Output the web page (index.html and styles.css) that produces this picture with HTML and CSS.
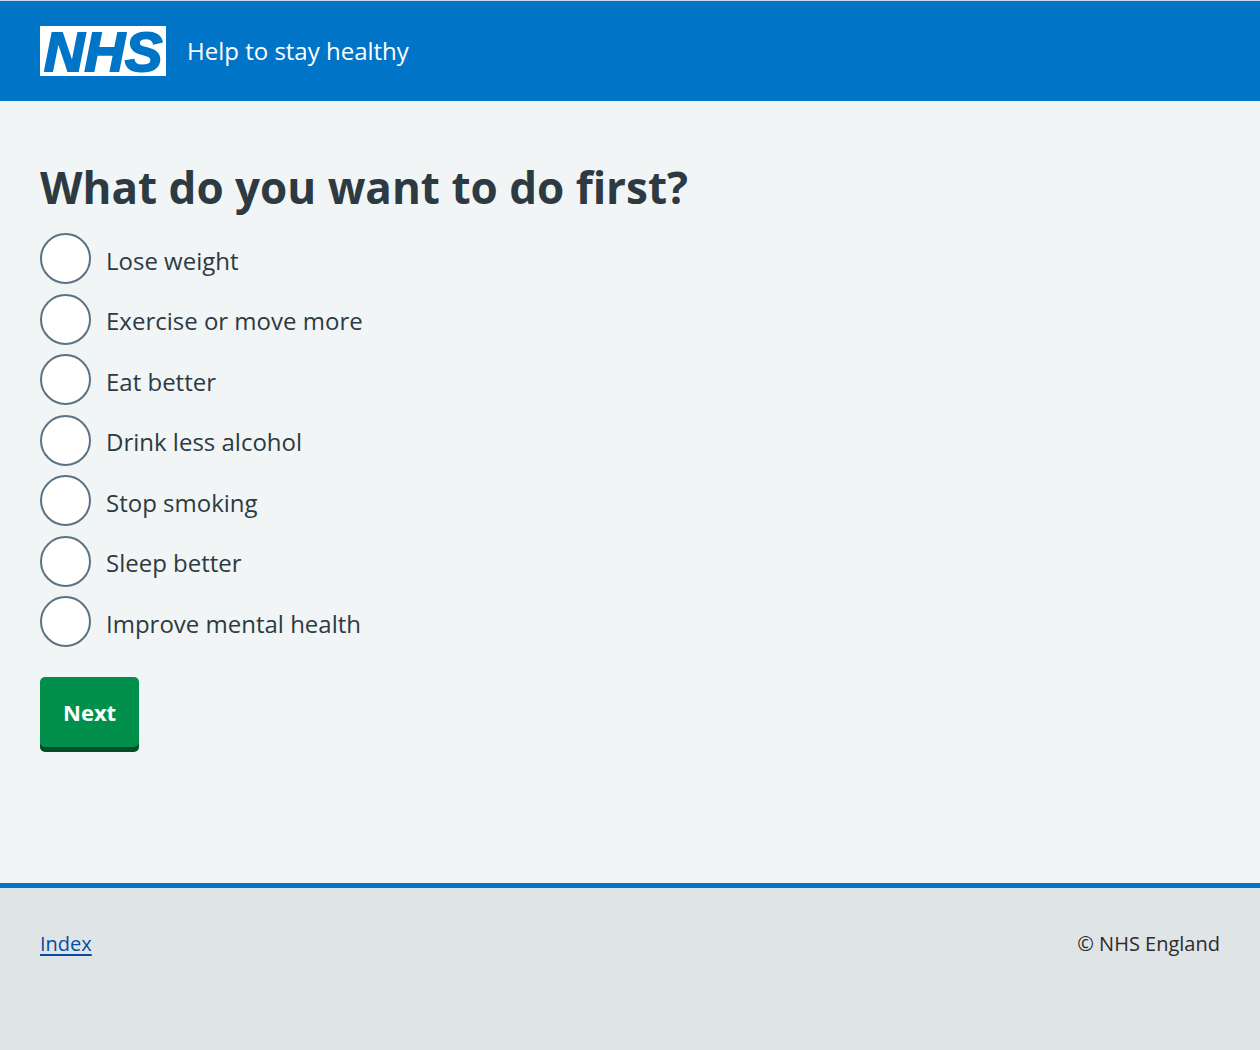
FILE: index.html
```html
<!DOCTYPE html>
<html lang="en">
<head>
  <meta charset="utf-8">
  <meta name="viewport" content="width=device-width, initial-scale=1">
  <title>What do you want to do first? - Help to stay healthy</title>
  <link rel="stylesheet" href="styles.css">
</head>
<body>
  <header class="header">
    <svg class="header-logo" viewBox="0 0 126 50" role="img" aria-label="NHS">
      <rect class="logo-panel" width="126" height="50"/>
      <text class="logo-text" x="4" y="45">NHS</text>
    </svg>
    <span class="header-service">Help to stay healthy</span>
  </header>

  <main class="main">
    <form class="form">
      <fieldset class="fieldset">
        <legend class="legend"><h1 class="heading">What do you want to do first?</h1></legend>
        <div class="radios">
          <div class="radio"><input class="radio-input" type="radio" name="goal" id="goal-weight"><label class="radio-label" for="goal-weight">Lose weight</label></div>
          <div class="radio"><input class="radio-input" type="radio" name="goal" id="goal-exercise"><label class="radio-label" for="goal-exercise">Exercise or move more</label></div>
          <div class="radio"><input class="radio-input" type="radio" name="goal" id="goal-eat"><label class="radio-label" for="goal-eat">Eat better</label></div>
          <div class="radio"><input class="radio-input" type="radio" name="goal" id="goal-alcohol"><label class="radio-label" for="goal-alcohol">Drink less alcohol</label></div>
          <div class="radio"><input class="radio-input" type="radio" name="goal" id="goal-smoking"><label class="radio-label" for="goal-smoking">Stop smoking</label></div>
          <div class="radio"><input class="radio-input" type="radio" name="goal" id="goal-sleep"><label class="radio-label" for="goal-sleep">Sleep better</label></div>
          <div class="radio"><input class="radio-input" type="radio" name="goal" id="goal-mental"><label class="radio-label" for="goal-mental">Improve mental health</label></div>
        </div>
      </fieldset>
      <button class="button" type="submit">Next</button>
    </form>
  </main>

  <footer class="footer">
    <a class="footer-link" href="#">Index</a>
    <p class="footer-copyright">© NHS England</p>
  </footer>
</body>
</html>
```

FILE: styles.css
```css
* {
  box-sizing: border-box;
}

body {
  display: flex;
  flex-direction: column;
  min-height: 100vh;
  margin: 0;
  background: #dfe4e6;
  color: #2d3a42;
  font-family: "Open Sans", sans-serif;
  font-size: 24px;
  line-height: 32px;
}

.header {
  display: flex;
  align-items: center;
  gap: 21px;
  padding: 25px 40px;
  border-top: 1px solid #c4dcee;
  background: #0075c7;
  color: #fff;
}

.header-logo {
  width: 126px;
  height: 50px;
  overflow: visible;
}

.logo-panel {
  fill: #fff;
}

.logo-text {
  fill: #0075c7;
  stroke: #0075c7;
  stroke-width: 2px;
  font: italic bold 56px "Liberation Sans", Arial, sans-serif;
}

.main {
  padding: 59px 40px 136px;
  background: #f1f5f6;
}

.fieldset {
  min-width: 0;
  margin: 0;
  padding: 0;
  border: 0;
}

.legend {
  padding: 0;
}

.heading {
  margin: 0 0 18px;
  font-size: 44px;
  line-height: 55px;
  font-weight: 700;
}

.radios {
  display: grid;
  grid-auto-rows: 51px 52px;
  row-gap: 9px;
}

.radio {
  display: flex;
  align-items: center;
  gap: 15px;
}

.radio-input {
  appearance: none;
  width: 51px;
  height: 51px;
  margin: 0;
  border: 2px solid #5a7283;
  border-radius: 50%;
  background: #fff;
}

.radio-input:checked {
  box-shadow: inset 0 0 0 10px #fff;
  background: #2d3a42;
}

.radio-label {
  padding-top: 4px;
}

.button {
  display: block;
  margin: 30px 0 0;
  padding: 19px 23px;
  border: 0;
  border-radius: 5px;
  background: #00904b;
  box-shadow: 0 5px 0 #004d28;
  color: #fff;
  font: inherit;
  font-size: 22px;
  font-weight: 700;
}

.footer {
  display: flex;
  flex-wrap: wrap;
  justify-content: space-between;
  gap: 20px;
  padding: 40px;
  border-top: 5px solid #0075c7;
  font-size: 20px;
}

.footer-link {
  color: #0b4aa2;
  text-underline-offset: 3px;
}

.footer-copyright {
  margin: 0;
  color: #2f2a2c;
}
```
